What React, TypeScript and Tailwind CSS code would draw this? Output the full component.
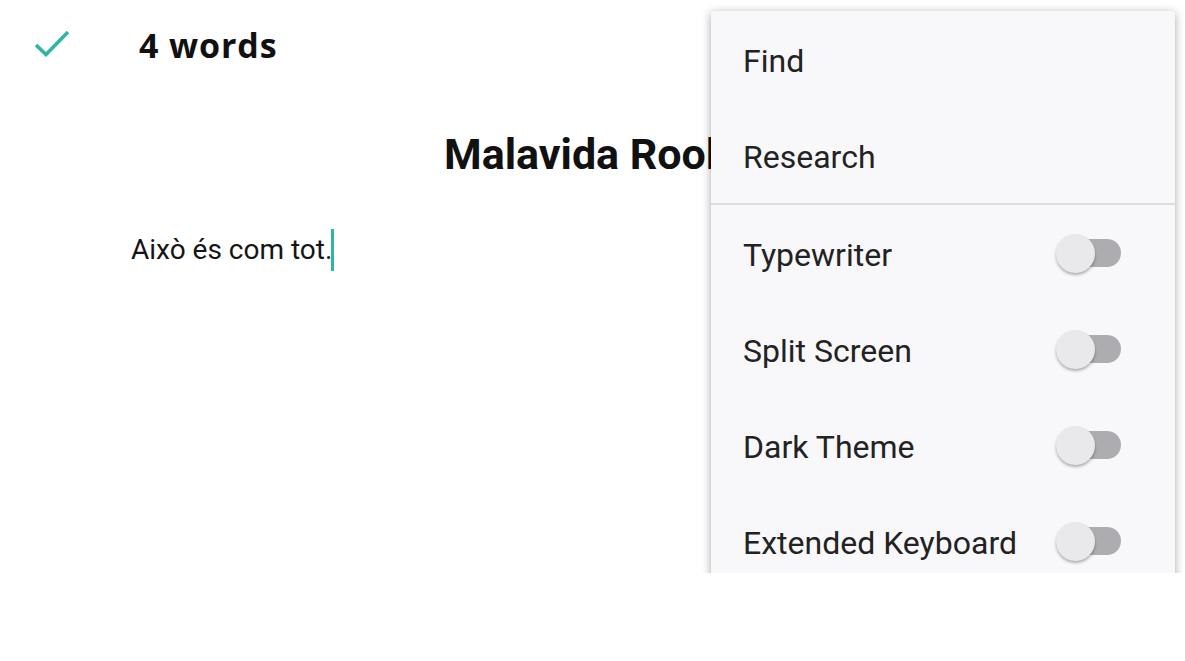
import React from 'react'

const toggles = ['Typewriter', 'Split Screen', 'Dark Theme', 'Extended Keyboard']

function Toggle() {
  return (
    <div className="relative w-[66px] h-[40px] flex items-center">
      <div className="absolute left-[6px] right-0 h-[28px] rounded-full bg-[#adadb1]" />
      <div className="absolute left-[1px] w-[39px] h-[39px] rounded-full bg-[#e9e9eb] shadow-[0_2px_3px_rgba(0,0,0,0.3)]" />
    </div>
  )
}

export default function App() {
  return (
    <div className="relative w-[1185px] h-[661px] bg-white overflow-hidden">
      <div className="relative h-[573px] overflow-hidden">
        <div className="flex items-center h-[92px] pl-[34px]">
          <svg width="36" height="28" viewBox="0 0 36 28" className="mt-[-6px]">
            <path d="M2 16 L12 25.5 L34 3" fill="none" stroke="#2fb5a3" strokeWidth="3.6" />
          </svg>
          <span
            className="ml-[69px] text-[34px] font-bold tracking-[0.9px] text-[#111] mt-[-2px]"
            style={{ fontFamily: '"Open Sans", Lato, sans-serif' }}
          >
            4 words
          </span>
        </div>

        <div style={{ fontFamily: 'Roboto, sans-serif' }}>
          <h1 className="pl-[444px] mt-[37px] text-[43px] font-bold leading-[51px] text-[#111] whitespace-nowrap">
            Malavida Rooks
          </h1>
          <p className="pl-[131px] mt-[49px] text-[28px] leading-[42px] text-[#151515] flex items-center">
            Això és com tot.
            <span className="inline-block w-[3px] h-[42px] bg-[#2fb5a3] ml-[-1px]" />
          </p>
        </div>

        <div
          className="absolute left-[711px] top-[11px] w-[464px] bg-[#f8f8fa] rounded-[3px] shadow-[0_2px_10px_rgba(0,0,0,0.35)]"
          style={{ fontFamily: 'Roboto, sans-serif' }}
        >
          <div className="h-[96px] flex items-center pl-[32px] pt-[3px] text-[32px] text-[#222]">Find</div>
          <div className="h-[96px] flex items-center pl-[32px] pt-[3px] text-[32px] text-[#222]">Research</div>
          <div className="h-[2px] bg-[#dcdce0]" />
          {toggles.map((t) => (
            <div key={t} className="h-[96px] flex items-center justify-between pl-[32px] pr-[54px] text-[32px] text-[#222]">
              <span className="pt-[3px]">{t}</span>
              <Toggle />
            </div>
          ))}
        </div>
      </div>
    </div>
  )
}
